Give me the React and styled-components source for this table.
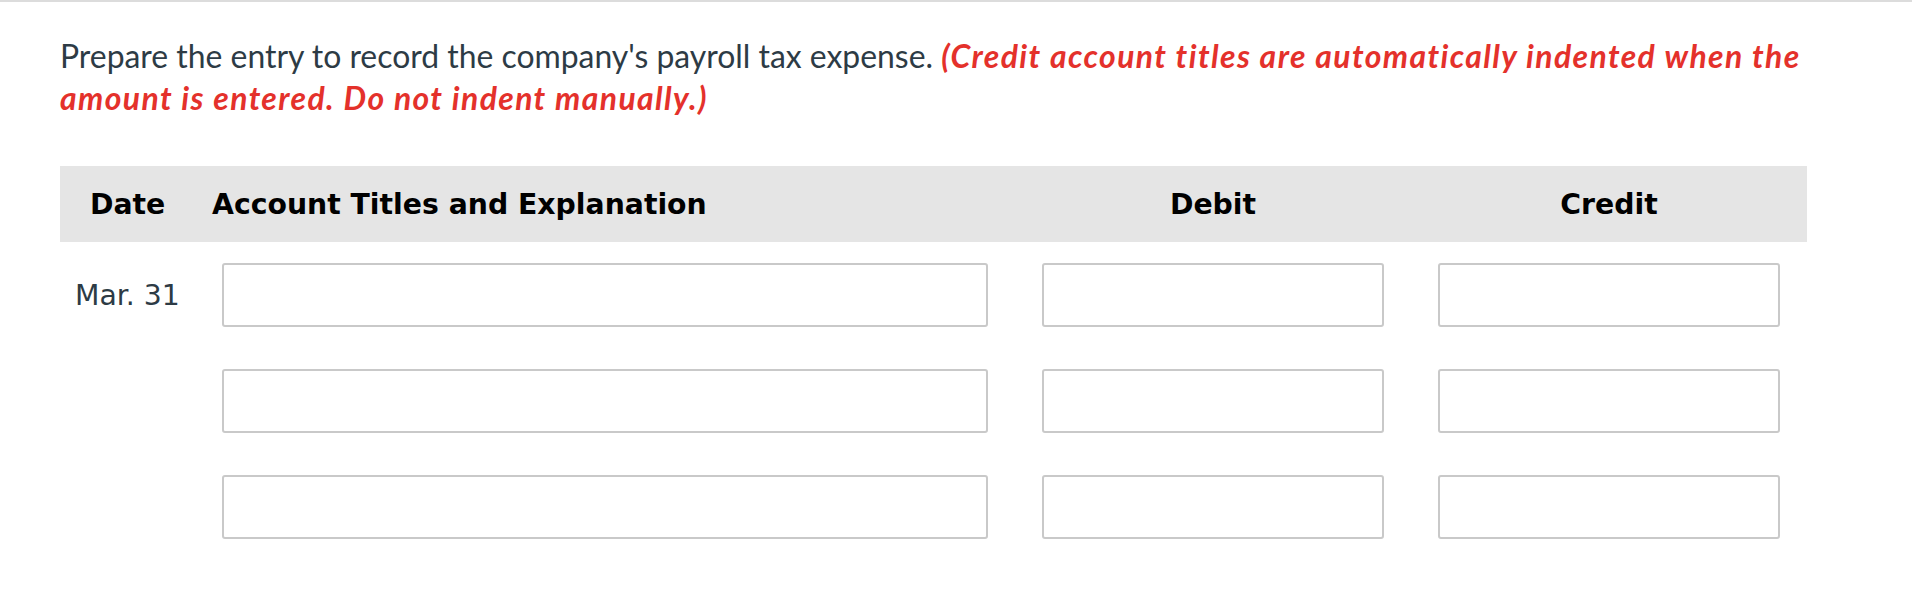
import * as React from "react";
import styled, { createGlobalStyle } from "styled-components";

const GlobalStyle = createGlobalStyle`
  html, body {
    margin: 0;
    padding: 0;
    background: #ffffff;
  }
`;

const Page = styled.div`
  width: 1912px;
  min-height: 612px;
  border-top: 2px solid #dcdcdc;
  box-sizing: border-box;
  background: #ffffff;
`;

const Content = styled.div`
  padding: 33px 0 0 60px;
`;

const Prompt = styled.p`
  margin: 0;
  width: 1770px;
  font-family: Lato, "Liberation Sans", sans-serif;
  font-size: 31.9px;
  line-height: 42px;
  color: #2d3b45;
  font-variant-ligatures: none;
`;

const Hint = styled.span`
  color: #e4312b;
  font-weight: bold;
  font-style: italic;
  letter-spacing: 1.4px;
`;

const Journal = styled.div`
  margin-top: 47px;
  width: 1747px;
  font-family: "DejaVu Sans", sans-serif;
`;

const Row = styled.div`
  display: grid;
  grid-template-columns: 108px 766px 342px 342px;
  column-gap: 54px;
  align-items: center;
  padding: ${(p) => (p.$head ? "0" : "21px")} 27px
    ${(p) => (p.$head ? "0" : "21px")} 0;
  height: ${(p) => (p.$head ? "76px" : "auto")};
  background: ${(p) => (p.$head ? "#e5e5e5" : "transparent")};
`;

const HeadCell = styled.div`
  font-size: 28.3px;
  font-weight: bold;
  color: #000000;
  white-space: nowrap;
  text-align: ${(p) => p.$align || "left"};
  padding-left: ${(p) => p.$pad || 0}px;
  margin-left: ${(p) => p.$shift || 0}px;
`;

const DateCell = styled.div`
  font-size: 28.3px;
  color: #2d3b45;
  white-space: nowrap;
  padding-left: 15px;
`;

const Field = styled.input`
  box-sizing: border-box;
  width: 100%;
  height: 64px;
  border: 2px solid #c9c9c9;
  border-radius: 3px;
  background: #ffffff;
  font-family: "DejaVu Sans", sans-serif;
  font-size: 26px;
  padding: 0 10px;
  outline: none;
`;

const rows = ["Mar. 31", "", ""];

export default function App() {
  return (
    <Page>
      <GlobalStyle />
      <Content>
        <Prompt>
          Prepare the entry to record the company's payroll tax expense.{" "}
          <Hint>
            (Credit account titles are automatically indented when the amount
            is entered. Do not indent manually.)
          </Hint>
        </Prompt>
        <Journal>
          <Row $head>
            <HeadCell $pad={30}>Date</HeadCell>
            <HeadCell $shift={-10}>Account Titles and Explanation</HeadCell>
            <HeadCell $align="center">Debit</HeadCell>
            <HeadCell $align="center">Credit</HeadCell>
          </Row>
          {rows.map((d, i) => (
            <Row key={i}>
              <DateCell>{d}</DateCell>
              <Field type="text" />
              <Field type="text" />
              <Field type="text" />
            </Row>
          ))}
        </Journal>
      </Content>
    </Page>
  );
}
